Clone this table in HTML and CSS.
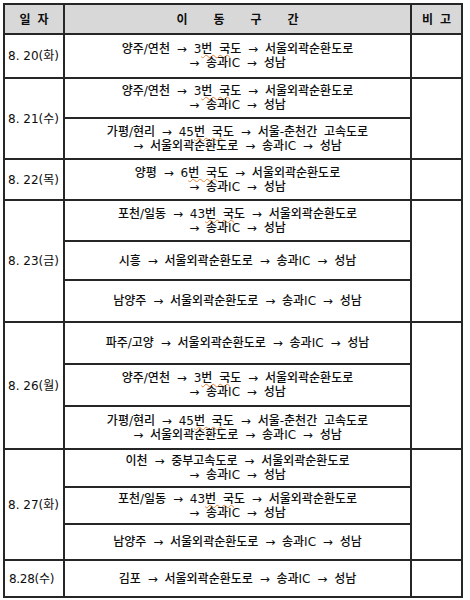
FILE: index.html
```html
<!DOCTYPE html>
<html lang="ko">
<head>
<meta charset="utf-8">
<link rel="stylesheet" href="styles.css">
</head>
<body>
<table class="sched">
  <colgroup>
    <col class="c-date">
    <col class="c-route">
    <col class="c-note">
  </colgroup>
  <tr class="h30 head">
    <th class="spaced">일자</th>
    <th class="wide">이동구간</th>
    <th class="spaced">비고</th>
  </tr>
  <tr class="h44 main">
    <td class="date">8. 20(화)</td>
    <td class="route"><span class="ln">양주/연천 → 3<span class="sq">번 국</span>도 → 서울외곽순환도로</span><span class="ln">→ 송과IC → 성남</span></td>
    <td class="note"></td>
  </tr>
  <tr class="h40 main">
    <td class="date" rowspan="2">8. 21(수)</td>
    <td class="route"><span class="ln">양주/연천 → 3<span class="sq">번 국</span>도 → 서울외곽순환도로</span><span class="ln">→ 송과IC → 성남</span></td>
    <td class="note" rowspan="2"></td>
  </tr>
  <tr class="h41 sub">
    <td class="route"><span class="ln">가평/현리 → 45<span class="sq">번 국</span>도 → 서울-춘천간 고속도로</span><span class="ln">→ 서울외곽순환도로 → 송과IC → 성남</span></td>
  </tr>
  <tr class="h41 main">
    <td class="date">8. 22(목)</td>
    <td class="route"><span class="ln">양평 → 6<span class="sq">번 국</span>도 → 서울외곽순환도로</span><span class="ln">→ 송과IC → 성남</span></td>
    <td class="note"></td>
  </tr>
  <tr class="h41 main">
    <td class="date" rowspan="3">8. 23(금)</td>
    <td class="route"><span class="ln">포천/일동 → 43<span class="sq">번 국</span>도 → 서울외곽순환도로</span><span class="ln">→ 송과IC → 성남</span></td>
    <td class="note" rowspan="3"></td>
  </tr>
  <tr class="h39 sub">
    <td class="route">시흥 → 서울외곽순환도로 → 송과IC → 성남</td>
  </tr>
  <tr class="h42 sub">
    <td class="route">남양주 → 서울외곽순환도로 → 송과IC → 성남</td>
  </tr>
  <tr class="h42 main">
    <td class="date" rowspan="3">8. 26(월)</td>
    <td class="route">파주/고양 → 서울외곽순환도로 → 송과IC → 성남</td>
    <td class="note" rowspan="3"></td>
  </tr>
  <tr class="h42 sub">
    <td class="route"><span class="ln">양주/연천 → 3<span class="sq">번 국</span>도 → 서울외곽순환도로</span><span class="ln">→ 송과IC → 성남</span></td>
  </tr>
  <tr class="h43 sub">
    <td class="route"><span class="ln">가평/현리 → 45<span class="sq">번 국</span>도 → 서울-춘천간 고속도로</span><span class="ln">→ 서울외곽순환도로 → 송과IC → 성남</span></td>
  </tr>
  <tr class="h38 main">
    <td class="date" rowspan="3">8. 27(화)</td>
    <td class="route"><span class="ln">이천 → 중부고속도로 → 서울외곽순환도로</span><span class="ln">→ 송과IC → 성남</span></td>
    <td class="note" rowspan="3"></td>
  </tr>
  <tr class="h37 sub">
    <td class="route"><span class="ln">포천/일동 → 43<span class="sq">번 국</span>도 → 서울외곽순환도로</span><span class="ln">→ 송과IC → 성남</span></td>
  </tr>
  <tr class="h36 sub">
    <td class="route">남양주 → 서울외곽순환도로 → 송과IC → 성남</td>
  </tr>
  <tr class="h37 main">
    <td class="date tight">8.28(수)</td>
    <td class="route">김포 → 서울외곽순환도로 → 송과IC → 성남</td>
    <td class="note"></td>
  </tr>
</table>
</body>
</html>
```

FILE: styles.css
```css
html, body {
  margin: 0;
  padding: 0;
  background: #ffffff;
}

body {
  padding: 3px 0 0 3px;
  font-family: "DejaVu Sans", "Noto Sans CJK KR", sans-serif;
  font-size: 12px;
  color: #0d0d0d;
}

.sched {
  border-collapse: collapse;
  table-layout: fixed;
  width: 460px;
  border: 2px solid #1a1a1a;
}

.c-date { width: 60px; }
.c-route { width: 347px; }
.c-note { width: 51px; }

.sched th,
.sched td {
  border: 2px solid #262626;
  padding: 0;
  line-height: 14px;
  vertical-align: middle;
}

.sched tr.sub td {
  border-top: 1px solid #2a2a2a;
}

.head th {
  background: #d8d8d8;
  font-family: "Noto Sans CJK KR", sans-serif;
  font-weight: bold;
  text-align: center;
}

.spaced {
  letter-spacing: 7px;
  text-indent: 7px;
}

.wide {
  letter-spacing: 26px;
  text-indent: 26px;
}

.date {
  text-align: left;
  padding-left: 3px !important;
  letter-spacing: 0;
  white-space: nowrap;
}

.date.tight {
  padding-left: 4px !important;
  letter-spacing: -0.3px;
}

.route {
  text-align: center;
  white-space: nowrap;
  word-spacing: 3px;
  font-weight: 500;
}

.ln {
  display: block;
  height: 14px;
}

.sq {
  text-decoration: underline wavy #e0843c;
  text-decoration-thickness: 1px;
  text-underline-offset: 1px;
}

.h30 { height: 30px; }
.h36 { height: 36px; }
.h37 { height: 37px; }
.h38 { height: 38px; }
.h39 { height: 39px; }
.h40 { height: 40px; }
.h41 { height: 41px; }
.h42 { height: 42px; }
.h43 { height: 43px; }
.h44 { height: 44px; }
```
